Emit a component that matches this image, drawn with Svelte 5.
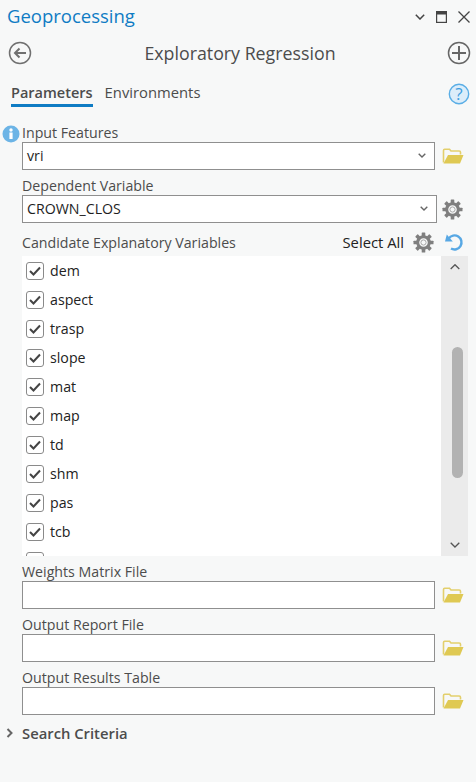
<script>
  const vars = ['dem','aspect','trasp','slope','mat','map','td','shm','pas','tcb',''];
  const teeth = [0,45,90,135,180,225,270,315];
</script>

<svelte:head><title>Geoprocessing</title></svelte:head>

{#snippet folder()}
  <svg class="folder" width="22" height="18" viewBox="0 0 22 18">
    <path d="M1.500 15.500V3.500C1.500 2.800 2 2.300 2.700 2.300h4.800l1.500 1.700h8.200c.8 0 1.300.5 1.300 1.300V7.500" fill="none" stroke="#e3cf6c" stroke-width="1.600"/>
    <path d="M1.500 16.500 6 8H21.500l-3.500 8.500z" fill="#dfc953"/>
  </svg>
{/snippet}

{#snippet gear(cls)}
  <svg class={cls} width="21" height="21" viewBox="0 0 21 21">
    {#each teeth as t}
      <rect x="8.700" y="0.500" width="3.600" height="5" rx="0.600" fill="#7f7f7f" transform={`rotate(${t} 10.500 10.500)`}/>
    {/each}
    <circle cx="10.500" cy="10.500" r="5.800" fill="#f7f8f8" stroke="#7f7f7f" stroke-width="3"/>
    <circle cx="10.500" cy="10.500" r="2.600" fill="#f7f8f8" stroke="#a8a8a8" stroke-width="1"/>
  </svg>
{/snippet}

{#snippet chevron(d)}
  <svg class="chev" width="10" height="6" viewBox="0 0 10 6"><path {d} fill="none" stroke="#555" stroke-width="1.300"/></svg>
{/snippet}

{#snippet combochev()}
  <svg class="chev" width="8" height="5" viewBox="0 0 8 5"><path d="M.7.700 4 4 7.300.7" fill="none" stroke="#666" stroke-width="1.400"/></svg>
{/snippet}

<div class="pane">
  <header class="title">
    <span class="pane-name">Geoprocessing</span>
    <div class="win">
      <svg width="10" height="6" viewBox="0 0 10 6"><path d="M.8.800 5 5l4.200-4.200" fill="none" stroke="#444" stroke-width="1.500"/></svg>
      <svg width="11" height="12" viewBox="0 0 11 12"><rect x=".6" y=".6" width="9.800" height="10.800" fill="none" stroke="#444" stroke-width="1.200"/><rect x="0" y="0" width="11" height="3.500" fill="#444"/></svg>
      <svg width="12" height="12" viewBox="0 0 12 12"><path d="M.5.500l11 11M11.500.500l-11 11" stroke="#444" stroke-width="1.300"/></svg>
    </div>
  </header>

  <div class="toolbar">
    <svg width="24" height="24" viewBox="0 0 24 24"><circle cx="12" cy="12" r="10.500" fill="none" stroke="#707070" stroke-width="1.500"/><path d="M18 12H7M11.500 7.500 7 12l4.500 4.500" fill="none" stroke="#707070" stroke-width="2"/></svg>
    <span class="tool-name">Exploratory Regression</span>
    <svg width="24" height="24" viewBox="0 0 24 24"><circle cx="12" cy="12" r="10.500" fill="none" stroke="#666" stroke-width="1.500"/><path d="M12 5v14M5 12h14" stroke="#666" stroke-width="2"/></svg>
  </div>

  <nav class="tabs">
    <span class="tab active">Parameters</span>
    <span class="tab env">Environments</span>
    <svg class="help" width="22" height="22" viewBox="0 0 22 22"><circle cx="11" cy="11" r="9.700" fill="#dcedfa" stroke="#5aaee6" stroke-width="1.400"/><text x="11" y="16.500" text-anchor="middle" class="qm">?</text></svg>
  </nav>

  <section class="form">
    <div class="param first">
      <svg class="info" width="18" height="18" viewBox="0 0 18 18"><circle cx="9" cy="9" r="8.500" fill="#6cb4e6"/><rect x="7.400" y="7.500" width="3.200" height="6.500" fill="#fff"/><circle cx="9" cy="5" r="1.700" fill="#fff"/></svg>
      <span class="label">Input Features</span>
      <div class="row">
        <div class="field combo">vri {@render combochev()}</div>
        {@render folder()}
      </div>
    </div>

    <div class="param">
      <span class="label">Dependent Variable</span>
      <div class="row">
        <div class="field combo wide">CROWN_CLOS {@render combochev()}</div>
        {@render gear('gear-side')}
      </div>
    </div>

    <div class="cand-head">
      <span class="label">Candidate Explanatory Variables</span>
      <span class="select-all">Select All</span>
      {@render gear('gear-head')}
      <svg class="undo" width="20" height="20" viewBox="0 0 20 20"><path d="M4.700 6.500A7 7 0 1 1 7 16.500" fill="none" stroke="#58a8e4" stroke-width="2.400"/><path d="M1 9.500 8.800 9.500 2.800 2.500z" fill="#58a8e4"/></svg>
    </div>

    <div class="list">
      <div class="items">
        {#each vars as v}
          <div class="item">
            <span class="check">
              {#if v}
                <svg width="12" height="10" viewBox="0 0 12 10"><path d="M1 5l3.500 3.500L11 1.500" fill="none" stroke="#444" stroke-width="2"/></svg>
              {/if}
            </span>
            <span>{v}</span>
          </div>
        {/each}
      </div>
      <div class="scroll">
        {@render chevron('M.7 5 5 .7 9.300 5')}
        <div class="thumb"></div>
        {@render chevron('M.7.700 5 5 9.300.7')}
      </div>
    </div>

    <div class="param after">
      <span class="label">Weights Matrix File</span>
      <div class="row"><div class="field"></div>{@render folder()}</div>
    </div>
    <div class="param">
      <span class="label">Output Report File</span>
      <div class="row"><div class="field"></div>{@render folder()}</div>
    </div>
    <div class="param">
      <span class="label">Output Results Table</span>
      <div class="row"><div class="field"></div>{@render folder()}</div>
    </div>

    <div class="group">
      <svg width="8" height="10" viewBox="0 0 8 10"><path d="M1.500 1 5.500 5l-4 4" fill="none" stroke="#666" stroke-width="2"/></svg>
      <span>Search Criteria</span>
    </div>
  </section>
</div>

<style>
  :global(body) { margin: 0; background: #f7f8f8; }
  .pane {
    width: 476px; height: 782px; overflow: hidden; background: #f7f8f8;
    font-family: "Open Sans", "Noto Sans", sans-serif; font-size: 14.200px; color: #4c4c4c;
  }
  .title { display: flex; justify-content: space-between; align-items: center; height: 34px; padding: 0 6px 0 7px; }
  .pane-name { font-size: 18.500px; color: #0f7cc4; margin-bottom: 3px; }
  .win { display: flex; align-items: center; gap: 11px; }
  .toolbar { display: flex; align-items: center; justify-content: space-between; height: 38px; padding: 0 5px 0 8px; }
  .tool-name { font-size: 17.800px; color: #4c4c4c; padding-left: 1px; }
  .tabs { display: flex; align-items: flex-start; height: 50px; padding: 11px 6px 0 11px; box-sizing: border-box; }
  .tab { font-size: 14.800px; line-height: 20px; padding-bottom: 2px; margin-right: 12px; color: #4c4c4c; }
  .tab.env { line-height: 18px; }
  .tab.active { border-bottom: 3px solid #0f7cc4; padding-bottom: 1px; font-weight: 600; font-size: 14.500px; margin-right: 12px; }
  .help { margin-left: auto; margin-top: 0; }
  .qm { font: 17px "Open Sans", sans-serif; fill: #3f9ddf; }
  .form { padding-left: 22px; }
  .param { position: relative; display: flex; flex-direction: column; margin-bottom: 5px; }
  .label { line-height: 22px; height: 20px; color: #4c4c4c; }
  .info { position: absolute; left: -20px; top: 3px; }
  .row { display: flex; align-items: center; gap: 7px; }
  .field { width: 413px; height: 28px; box-sizing: border-box; background: #fff; border: 1.500px solid #8f8f8f; display: flex; align-items: center; padding: 0 8px 2px 4px; color: #1e1e1e; justify-content: space-between; }
  .field.wide { width: 415px; }
  .chev { display: block; }
  .folder { flex: none; }
  .cand-head { display: flex; align-items: center; height: 27px; padding: 1px 12px 0 0; box-sizing: border-box; }
  .cand-head .label { margin-right: auto; }
  .select-all { color: #222; font-size: 14.800px; }
  .gear-head { margin-left: 9px; }
  .undo { margin-left: 10px; }
  .gear-side { margin-left: -2px; }
  .list { display: flex; height: 300px; width: 446px; margin-top: 1px; background: #fff; overflow: hidden; }
  .items { flex: 1; overflow: hidden; }
  .item { display: flex; align-items: center; gap: 6px; height: 29px; padding-left: 4px; color: #222; }
  .check { flex: none; width: 18px; height: 18px; box-sizing: border-box; border: 1.500px solid #8a8a8a; border-radius: 3px; display: flex; align-items: center; justify-content: center; background: #fff; }
  .scroll { width: 27px; flex: none; background: #ebebeb; display: flex; flex-direction: column; align-items: center; padding: 8px 0; box-sizing: border-box; position: relative; }
  .thumb { position: absolute; left: 11px; top: 91px; width: 11px; height: 131px; border-radius: 6px; background: #b2b2b2; }
  .scroll .chev:last-child { margin-top: auto; }
  .after { margin-top: 5px; }
  .group { display: flex; align-items: center; gap: 8px; margin-left: -16px; margin-top: 6px; font-size: 14.800px; font-weight: 600; height: 24px; color: #4c4c4c; }
</style>
